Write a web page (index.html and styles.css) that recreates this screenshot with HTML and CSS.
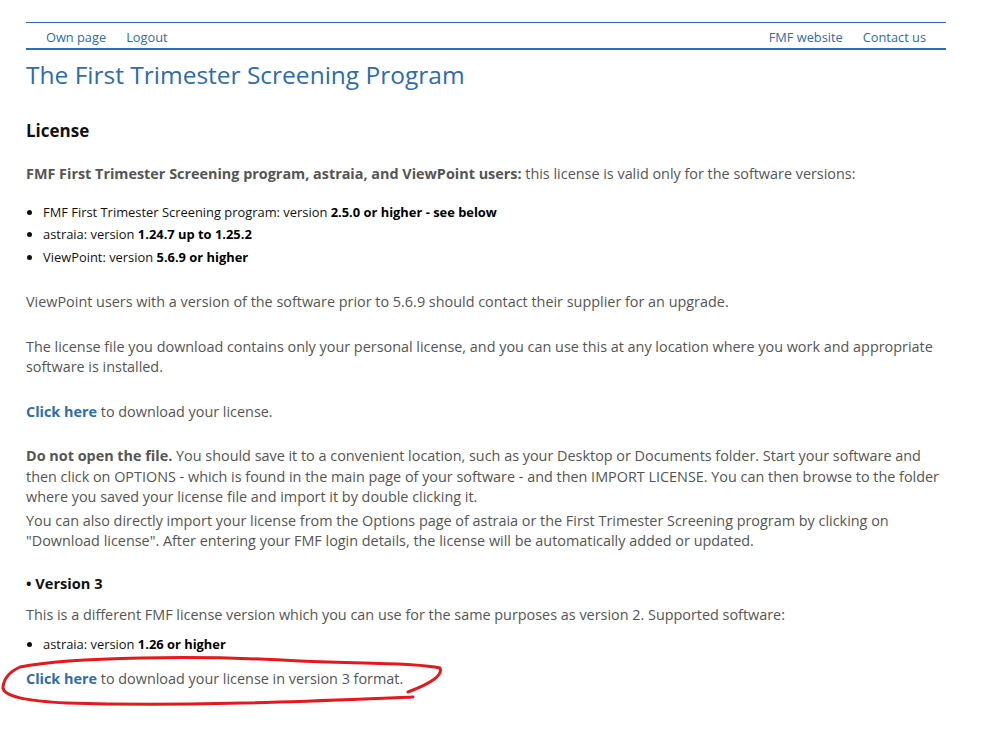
FILE: index.html
```html
<!DOCTYPE html>
<html lang="en">
<head>
<meta charset="utf-8">
<title>The First Trimester Screening Program</title>
<link rel="stylesheet" href="styles.css">
</head>
<body>
<div class="page">
  <nav class="topnav">
    <div class="nav-left">
      <a href="#">Own page</a>
      <a href="#">Logout</a>
    </div>
    <div class="nav-right">
      <a href="#">FMF website</a>
      <a href="#">Contact us</a>
    </div>
  </nav>
  <h1 class="title">The First Trimester Screening Program</h1>
  <h3 class="section">License</h3>
  <p class="p-intro"><strong>FMF First Trimester Screening program, astraia, and ViewPoint users:</strong> this license is valid only for the software versions:</p>
  <ul class="versions">
    <li>FMF First Trimester Screening program: version <b>2.5.0 or higher - see below</b></li>
    <li>astraia: version <b>1.24.7 up to 1.25.2</b></li>
    <li>ViewPoint: version <b>5.6.9 or higher</b></li>
  </ul>
  <p class="p-gap">ViewPoint users with a version of the software prior to 5.6.9 should contact their supplier for an upgrade.</p>
  <p class="p-gap">The license file you download contains only your personal license, and you can use this at any location where you work and appropriate software is installed.</p>
  <p class="p-gap"><a class="dl" href="#">Click here</a> to download your license.</p>
  <p class="p-gap"><strong>Do not open the file.</strong> You should save it to a convenient location, such as your Desktop or Documents folder. Start your software and then click on OPTIONS - which is found in the main page of your software - and then IMPORT LICENSE. You can then browse to the folder where you saved your license file and import it by double clicking it.</p>
  <p class="p-tight">You can also directly import your license from the Options page of astraia or the First Trimester Screening program by clicking on "Download license". After entering your FMF login details, the license will be automatically added or updated.</p>
  <h4 class="subhead">&bull; Version 3</h4>
  <p class="p-v3">This is a different FMF license version which you can use for the same purposes as version 2. Supported software:</p>
  <ul class="versions v3list">
    <li>astraia: version <b>1.26 or higher</b></li>
  </ul>
  <p class="p-last"><a class="dl" href="#">Click here</a> to download your license in version 3 format.</p>
</div>
<svg class="scribble" width="986" height="730" viewBox="0 0 986 730" aria-hidden="true">
  <path d="M 20 667 C 70 657, 200 655, 300 661 C 370 664, 420 663, 440 668 C 443 675, 432 683, 408 692 M 413 697 C 330 700, 200 707, 67 703 C 25 701, 2 696, 3 687 C 4 678, 11 671, 20 667" fill="none" stroke="#e3191c" stroke-width="3" stroke-linecap="round" stroke-linejoin="round"/>
</svg>
</body>
</html>
```

FILE: styles.css
```css
html, body {
  margin: 0;
  padding: 0;
  background: #ffffff;
}
body {
  font-family: "Open Sans", "Noto Sans", sans-serif;
  color: #555555;
  font-size: 14.4px;
  position: relative;
  min-height: 730px;
}
.page {
  width: 920px;
  margin-left: 26px;
  padding-top: 22px;
}
.topnav {
  display: flex;
  justify-content: space-between;
  align-items: center;
  height: 25px;
  border-top: 1px solid #2d6cb0;
  border-bottom: 2px solid #2d6cb0;
  padding: 0 10px;
  font-size: 12.8px;
}
.topnav a {
  color: #2d6cb0;
  text-decoration: none;
  padding: 3px 10px 0;
  line-height: 22px;
}
.nav-left, .nav-right {
  display: flex;
}
.title {
  margin: 9px 0 0;
  font-size: 24.5px;
  font-weight: 400;
  line-height: 32px;
  color: #2d6cb0;
}
.section {
  margin: 28px 0 0;
  font-size: 17px;
  line-height: 24px;
  font-weight: 700;
  color: #111111;
}
p {
  margin: 0;
  line-height: 20.5px;
}
.p-intro {
  margin-top: 21px;
}
.p-intro strong {
  color: #555555;
}
strong {
  font-weight: 700;
}
.versions {
  margin: 16px 0 0;
  padding-left: 17px;
  font-size: 12.9px;
  line-height: 22.5px;
  color: #111111;
}
.versions b {
  font-weight: 700;
  color: #000000;
}
.p-gap {
  margin-top: 24px;
}
.p-tight {
  margin-top: 3px;
}
.subhead {
  margin: 20px 0 0;
  font-size: 14.6px;
  line-height: 22px;
  font-weight: 700;
  color: #111111;
}
.p-v3 {
  margin-top: 11px;
}
.v3list {
  margin-top: 8px;
}
.p-last {
  margin-top: 13px;
}
.dl {
  color: #2d6cb0;
  font-weight: 700;
  text-decoration: none;
}
.scribble {
  position: absolute;
  left: 0;
  top: 0;
  pointer-events: none;
}
```
